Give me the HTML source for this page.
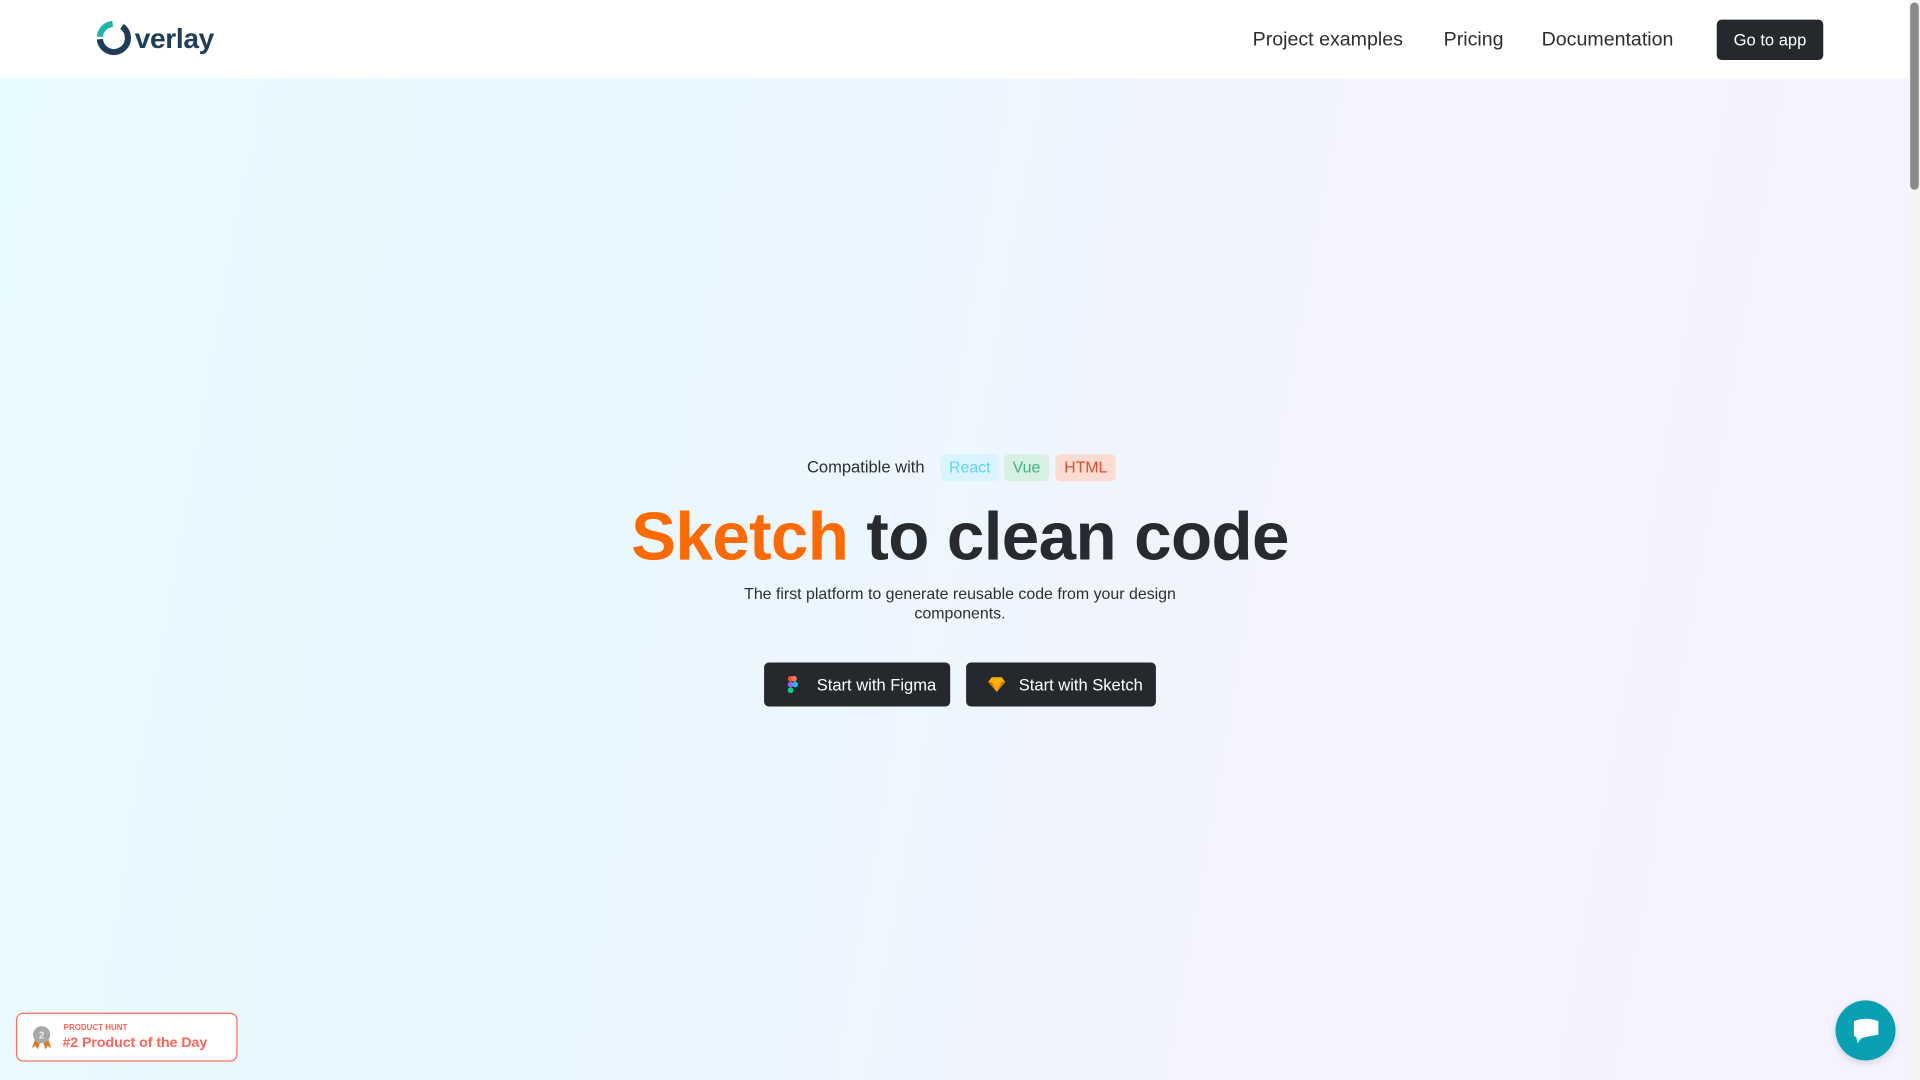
<!DOCTYPE html>
<html><head><meta charset="utf-8"><style>
html,body{margin:0;padding:0;width:1920px;height:1080px;overflow:hidden;font-family:"Liberation Sans",sans-serif}
#w{position:absolute;left:0;top:0;width:1568px;height:882px;transform:scale(1.22449);transform-origin:0 0;background:linear-gradient(100deg,#e8fbff 0%,#e9f7fe 35%,#f3f4fd 65%,#f6f3fd 100%)}
.hdr{position:absolute;left:0;top:0;width:1559px;height:64px;background:#fff}
.nav{position:absolute;top:24px;font-size:16px;color:#2b2f33}
.btn{position:absolute;background:#25292d;color:#fff;border-radius:4px;font-size:13.5px;display:flex;align-items:center}
.tag{position:absolute;top:371px;height:22px;border-radius:4px;font-size:13px;line-height:22px;padding:0 7px}
</style></head><body><div id="w">
<div class="hdr">
<svg style="position:absolute;left:78px;top:16px" width="30" height="30" viewBox="0 0 30 30"><path d="M21.6 5.58 A11.5 11.5 0 1 1 3.54 16" fill="none" stroke="#1f3d56" stroke-width="5"/><path d="M3.54 14 A11.5 11.5 0 0 1 14 3.54" fill="none" stroke="#1fb5a7" stroke-width="5"/></svg>
<div style="position:absolute;left:110px;top:18px;font-size:23px;font-weight:bold;color:#1f3d56;letter-spacing:-0.3px">verlay</div>
<div class="nav" style="left:1023px">Project examples</div>
<div class="nav" style="left:1179px">Pricing</div>
<div class="nav" style="left:1259px">Documentation</div>
<div class="btn" style="left:1402px;top:16px;width:87px;height:33px;justify-content:center">Go to app</div>
</div>
<div style="position:absolute;left:1559px;top:0;width:9px;height:882px;background:#f4f4f4"></div>
<div style="position:absolute;left:1560px;top:2px;width:7px;height:153px;background:#8a8a8a;border-radius:4px"></div>

<div style="position:absolute;left:659px;top:374px;font-size:13.5px;color:#2b2f33">Compatible with</div>
<div class="tag" style="left:768px;background:#d9f4fd;color:#5fd3f5">React</div>
<div class="tag" style="left:820px;background:#d7f0e4;color:#3fb27f">Vue</div>
<div class="tag" style="left:862px;background:#fbdcd3;color:#e34c26">HTML</div>
<div style="position:absolute;left:0;width:1568px;top:406px;text-align:center;font-size:55px;font-weight:bold;color:#272b2f;letter-spacing:-0.5px"><span style="color:#ff6a00">Sketch</span> to clean code</div>
<div style="position:absolute;left:594px;width:380px;top:477px;text-align:center;font-size:13px;line-height:16px;color:#2b2f33">The first platform to generate reusable code from your design components.</div>
<div class="btn" style="left:624px;top:541px;width:152px;height:36px">
<svg style="margin-left:19px" width="10" height="14" viewBox="0 0 10 15"><rect x="0" y="0" width="5" height="5" rx="2.5" fill="#f24e1e"/><rect x="3" y="0" width="5" height="5" rx="2.5" fill="#ff7262"/><rect x="0" y="5" width="5" height="5" rx="2.5" fill="#a259ff"/><circle cx="6.5" cy="7.5" r="2.5" fill="#1abcfe"/><rect x="0" y="10" width="5" height="5" rx="2.5" fill="#0acf83"/></svg>
<span style="margin-left:14px">Start with Figma</span></div>
<div class="btn" style="left:789px;top:541px;width:155px;height:36px">
<svg style="margin-left:18px" width="14" height="12" viewBox="0 0 14 12"><path d="M3 0H11L14 4L7 12L0 4Z" fill="#fdb300"/><path d="M0 4H14L7 12Z" fill="#ea6c00"/><path d="M3 4H11L7 12Z" fill="#fdad00"/></svg>
<span style="margin-left:11px">Start with Sketch</span></div>

<div style="position:absolute;left:13px;top:827px;width:179px;height:38px;border:1px solid #ff6f5c;border-radius:6px;background:#fff">
<svg style="position:absolute;left:11px;top:9px" width="18" height="21" viewBox="0 0 18 21"><path d="M4 11L1 19L4 17L6 20L8 13Z M14 11L17 19L14 17L12 20L10 13Z" fill="#e0782a"/><circle cx="9" cy="8" r="7" fill="#a8a8a8"/><text x="9" y="11" font-size="8" fill="#eee" text-anchor="middle" font-family="Liberation Sans" font-weight="bold">2</text></svg>
<div style="position:absolute;left:38px;top:8px;font-size:6.5px;font-weight:bold;color:#ff6154">PRODUCT HUNT</div>
<div style="position:absolute;left:37px;top:18px;font-size:11.5px;font-weight:bold;color:#ff6154">#2 Product of the Day</div>
</div>
<div style="position:absolute;left:1499px;top:817px;width:49px;height:49px;border-radius:50%;background:#0aa0b3;box-shadow:0 2px 6px rgba(0,0,0,.15)">
<svg style="position:absolute;left:13px;top:14px" width="24" height="22" viewBox="0 0 24 22"><path d="M2 3Q12 -1 22 3V14Q14 15 8 17L5 21L4 16Q2 15 2 14Z" fill="#fff"/></svg>
</div>
</div></body></html>
